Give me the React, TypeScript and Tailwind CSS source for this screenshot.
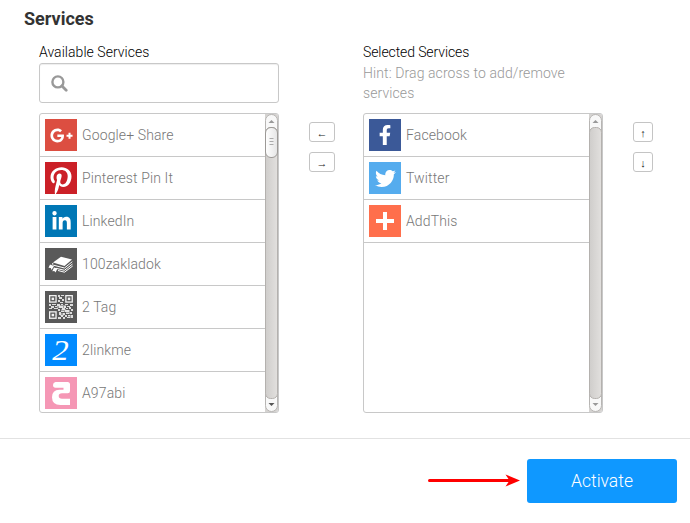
import type { ReactNode } from "react";
import { FaGooglePlusG, FaPinterestP, FaLinkedinIn, FaFacebookF, FaTwitter } from "react-icons/fa";

type Service = { name: string; color: string; icon: ReactNode };

function Finder({ x, y }: { x: number; y: number }) {
  return (
    <>
      <rect x={x + 0.65} y={y + 0.65} width="6.4" height="6.4" strokeWidth="1.3" stroke="#f2f2f2" fill="none" />
      <rect x={x + 2.6} y={y + 2.6} width="2.5" height="2.5" fill="#f2f2f2" />
    </>
  );
}

function QrIcon() {
  return (
    <svg width="32" height="32" viewBox="0 0 32 32">
      <Finder x={4} y={4} />
      <Finder x={20.2} y={4} />
      <Finder x={4} y={20.2} />
      <path
        d="M13 4h2v2h-2zM16 4h3v1h-3zM14 6h3v2h-3zM17 8h2v2h-2zM13 9h2v2h-2zM15 11h3v1h-3zM4 13h2v2H4zM7 13h4v1H7zM12 13h3v2h-3zM16 13h2v1h-2zM20 13h3v1h-3zM25 13h3v2h-3zM6 15h3v2H6zM10 15h2v1h-2zM14 15h4v2h-4zM19 15h2v2h-2zM22 15h3v1h-3zM4 17h3v1H4zM9 17h4v1H9zM13 18h2v2h-2zM17 17h3v2h-3zM21 17h2v1h-2zM24 16h2v2h-2zM26 18h2v2h-2zM16 20h3v1h-3zM20 19h4v2h-4zM14 21h2v3h-2zM18 22h2v2h-2zM21 22h3v1h-3zM25 21h2v2h-2zM16 24h2v2h-2zM20 24h2v2h-2zM23 24h2v1h-2zM26 24h2v3h-2zM13 26h3v2h-3zM18 26h2v2h-2zM22 26h3v1h-3z"
        fill="#ddd"
      />
      <path d="M12 14h9v3h-9zM16 18h5v3h-5zM21 19h4v4h-4zM15 22h4v3h-4zM23 24h3v3h-3z" fill="#eee" opacity=".45" />
    </svg>
  );
}

function BooksIcon() {
  return (
    <svg width="32" height="32" viewBox="0 0 32 32" fill="none" stroke="#fff" strokeLinejoin="round">
      <path d="M16 8.7 27 11.5 19.5 18 8 14.6Z" fill="#fff" stroke="none" />
      <path d="M8 15Q6.5 16.3 8.5 17.2L19.5 20 27.3 13.7" strokeWidth="1" />
      <path d="M11 20.3 19.5 22.3 27.5 16M13 22.5 19.5 24.2 27.7 18" strokeWidth="1" />
      <path d="M5 16.5 9 18.1 6.5 21.9 5.8 20 3.5 19.8ZM9 19.6 12.5 20.6 10.5 24.6 9.3 23 7.3 23.2Z" fill="#fff" stroke="none" />
    </svg>
  );
}

function SearchIcon() {
  return (
    <svg width="17" height="17" viewBox="0 0 17 17" fill="none" stroke="#999">
      <circle cx="6.9" cy="6.9" r="5.5" strokeWidth="2.4" />
      <path d="m11 11 4.2 4.2" strokeWidth="2.8" strokeLinecap="round" />
    </svg>
  );
}

const available: Service[] = [
  { name: "Google+ Share", color: "bg-[#dc4e41]", icon: <FaGooglePlusG className="h-[23px] w-[23px]" /> },
  { name: "Pinterest Pin It", color: "bg-[#cb2027]", icon: <FaPinterestP className="mt-[6px] h-[28px] w-[22px]" /> },
  { name: "LinkedIn", color: "bg-[#0077b5]", icon: <FaLinkedinIn className="h-[21px] w-[21px]" /> },
  { name: "100zakladok", color: "bg-[#595959]", icon: <BooksIcon /> },
  { name: "2 Tag", color: "bg-[#595959]", icon: <QrIcon /> },
  {
    name: "2linkme",
    color: "bg-[#018bff]",
    icon: <span className="mr-px mb-px scale-x-110 font-['Liberation_Serif',serif] text-[30px] leading-none italic">2</span>,
  },
  {
    name: "A97abi",
    color: "bg-[#f597b5]",
    icon: (
      <svg width="32" height="32" viewBox="0 0 32 32" fill="#fff">
        <path d="M10.5 5H22.5Q25 5 25 7.5V14Q25 16.2 22.8 16.2H17Q13.7 16.2 13.7 19T17 21.8H25V28H15.5Q7 28 7 20.3 7 12.7 14.5 12.7H18.5V10.7H10.5Q8 10.7 8 8T10.5 5Z" />
      </svg>
    ),
  },
];

const selected: Service[] = [
  { name: "Facebook", color: "bg-[#3b5998]", icon: <FaFacebookF className="h-[20px] w-[20px]" /> },
  { name: "Twitter", color: "bg-[#55acee]", icon: <FaTwitter className="h-[21px] w-[21px]" /> },
  {
    name: "AddThis",
    color: "bg-[#ff6f4c]",
    icon: (
      <svg width="32" height="32" viewBox="0 0 32 32" fill="#fff">
        <path d="M14 7h4v7h7v4h-7v7h-4v-7H7v-4h7z" />
      </svg>
    ),
  },
];

function ScrollBar({ thumb }: { thumb: boolean }) {
  const id = thumb ? "available" : "selected";
  return (
    <svg className="shrink-0" width="13" height="298" viewBox="0 0 13 298">
      <defs>
        <linearGradient id={`${id}-track`}>
          <stop stopColor="#cfcdcb" />
          <stop offset="1" stopColor="#e2e0de" />
        </linearGradient>
        <linearGradient id={`${id}-thumb`}>
          <stop stopColor="#fff" />
          <stop offset="1" stopColor="#e5e5e5" />
        </linearGradient>
      </defs>
      <path d="M0 0h13v298H0z" fill="#d5d3d1" />
      <rect x=".5" y=".5" width="12" height="297" rx="6" fill="#f8f8f8" stroke="#b7b5b3" />
      <rect x=".5" y="13.5" width="12" height="271" rx="5" fill={`url(#${id}-track)`} stroke="#b4b1ae" />
      <path d="m3.5 9 3-3 3 3z" fill="#999" />
      <path d="m3.5 289 3 3 3-3z" fill={thumb ? "#555" : "#999"} />
      {thumb && (
        <>
          <rect x=".5" y="13.5" width="12" height="30" rx="5.5" fill={`url(#${id}-thumb)`} stroke="#9c9996" />
          <path d="M4.5 24.5h4m-4 3h4m-4 3h4" stroke="#aaa" />
        </>
      )}
    </svg>
  );
}

function ServiceList({ items, thumb }: { items: Service[]; thumb: boolean }) {
  return (
    <div className="flex h-[300px] w-[240px] overflow-hidden rounded-[3px] border border-[#c8c8c8]">
      <ul className="min-w-0 flex-1">
        {items.map((s) => (
          <li key={s.name} className="flex h-[43px] gap-[5px] border-b border-[#c8c8c8] pt-[5px] pl-[5px]">
            <span className={`flex h-8 w-8 shrink-0 items-center justify-center overflow-hidden text-white ${s.color}`}>
              {s.icon}
            </span>
            <span className="text-[14px] leading-8 tracking-[0.12px] text-[#777]">{s.name}</span>
          </li>
        ))}
      </ul>
      <ScrollBar thumb={thumb} />
    </div>
  );
}

function MoveButton({ label, wide }: { label: string; wide?: boolean }) {
  return (
    <button
      className={`flex h-5 items-center justify-center rounded-[3px] border border-[#c4c4c4] bg-white pt-[2px] font-['Liberation_Serif',serif] text-[11px] leading-none text-[#222] ${wide ? "w-[26px]" : "w-5"}`}
    >
      {label}
    </button>
  );
}

export default function App() {
  return (
    <div className="h-[523px] w-[690px] overflow-hidden bg-white font-['Roboto',sans-serif] font-light">
      <main className="h-[439px] border-b border-[#e2e2e2] pt-2 pl-6">
        <h2 className="h-[34px] text-[18px] leading-[22px] font-bold text-[#333]">Services</h2>
        <div className="flex pl-[15px]">
          <section className="w-[240px]">
            <h3 className="h-[21px] text-[14px] leading-[20px] tracking-[0.04px] text-black">Available Services</h3>
            <div className="mb-[10px] flex h-10 items-center rounded-[3px] border border-[#c8c8c8] pl-[11px] shadow-[inset_0_1px_1px_#eee]">
              <SearchIcon />
            </div>
            <ServiceList items={available} thumb />
          </section>
          <div className="ml-[30px] flex flex-col gap-[10px] pt-20">
            <MoveButton label="←" wide />
            <MoveButton label="→" wide />
          </div>
          <section className="ml-7 w-[240px]">
            <h3 className="h-[21px] text-[14px] leading-[20px] tracking-[-0.1px] text-black">Selected Services</h3>
            <p className="h-[50px] w-[220px] text-[14px] leading-[20px] tracking-[0.1px] text-[#999]">
              Hint: Drag across to add/remove services
            </p>
            <ServiceList items={selected} thumb={false} />
          </section>
          <div className="ml-[30px] flex flex-col gap-[10px] pt-20">
            <MoveButton label="↑" />
            <MoveButton label="↓" />
          </div>
        </div>
      </main>
      <footer className="flex justify-end pt-5 pr-[13px]">
        <svg className="mt-[13px] mr-[7px]" width="92" height="16" viewBox="0 0 92 16">
          <path d="M1.5 8.5H82" stroke="#f00" strokeWidth="3" strokeLinecap="round" />
          <path d="M92 8.5 77.5 2.5 81.5 8.5 77.5 14.5Z" fill="#f00" />
        </svg>
        <button className="h-11 w-[150px] rounded-[3px] bg-[#0f98ff] text-[17.5px] text-white">Activate</button>
      </footer>
    </div>
  );
}
